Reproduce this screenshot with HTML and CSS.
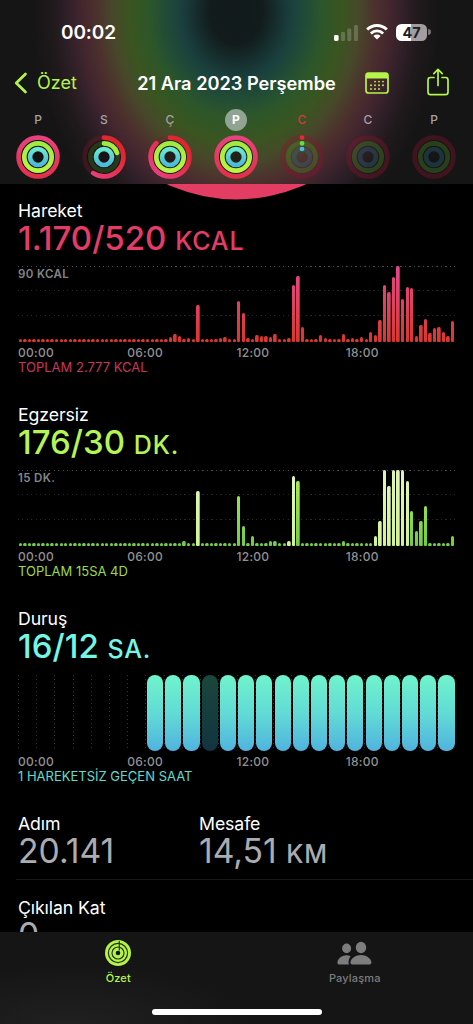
FILE: index.html
```html
<!DOCTYPE html>
<html lang="tr">
<head>
	<meta charset="UTF-8">
	<title>Özet</title>
	<link rel="stylesheet" href="styles.css">
</head>
<body>

	<div class="header">
		<div class="status">
			<span class="time">00:02</span>
			<div class="status_icons">
				<svg class="signal" width="25" height="17" viewBox="0 0 25 17">
					<rect x="0" y="11" width="4.6" height="6" rx="1.4" fill="#fff"/>
					<rect x="7" y="8" width="4" height="9" rx="1.2" fill="#fff" opacity=".2"/>
					<rect x="13.3" y="4.5" width="4" height="12.5" rx="1.2" fill="#fff" opacity=".2"/>
					<rect x="20" y="1" width="4" height="16" rx="1.2" fill="#fff" opacity=".2"/>
				</svg>
				<svg class="wifi" width="22" height="16" viewBox="0 0 22 16">
					<g fill="none" stroke="#fff" stroke-width="2.9">
						<path d="M1.2 5.6 A13.8 13.8 0 0 1 20.8 5.6"/>
						<path d="M4.9 9.4 A8.6 8.6 0 0 1 17.1 9.4"/>
					</g>
					<path d="M7.4 11.9 A5.1 5.1 0 0 1 14.6 11.9 L11 15.6 Z" fill="#fff"/>
				</svg>
				<div class="battery"><span>47</span></div>
				<svg width="3" height="6" viewBox="0 0 3 6"><path d="M0 0 A3 3 0 0 1 0 6Z" fill="#fff" opacity=".4"/></svg>
			</div>
		</div>

		<div class="nav">
			<div class="back">
				<svg width="14" height="22" viewBox="0 0 14 22"><path d="M11.5 2 L2.2 11 L11.5 20" fill="none" stroke="#b5f44a" stroke-width="2.7" stroke-linecap="round" stroke-linejoin="round"/></svg>
				<span>Özet</span>
			</div>
			<div class="title">21 Ara 2023 Perşembe</div>
			<div class="actions">
				<svg width="24" height="22" viewBox="0 0 24 22">
					<rect x="1" y="1" width="22" height="20" rx="2.6" fill="none" stroke="#b5f44a" stroke-width="1.7"/>
					<path d="M1 6.6 V3.4 Q1 1 3.4 1 H20.6 Q23 1 23 3.4 V6.6Z" fill="#b5f44a"/>
					<g stroke="#b5f44a" stroke-width="1.9" stroke-linecap="round" stroke-dasharray="0 4">
						<path d="M10 9.6 H18.5"/>
						<path d="M6 13.3 H18.5"/>
						<path d="M6 17 H14.5"/>
					</g>
				</svg>
				<svg class="share" width="22" height="28" viewBox="0 0 22 28" fill="none" stroke="#b5f44a" stroke-width="1.7" stroke-linecap="round" stroke-linejoin="round">
					<path d="M7 9.5 H3.4 Q1 9.5 1 12 V24 Q1 26.7 3.6 26.7 H18.4 Q21 26.7 21 24 V12 Q21 9.5 18.6 9.5 H15"/>
					<path d="M11 17.5 V1.6 M6.8 5.6 L11 1.4 L15.2 5.6"/>
				</svg>
			</div>
		</div>

		<div class="week" id="week"></div>
	</div>

	<div class="content">
		<svg class="big_ring" width="473" height="16" viewBox="0 184 473 16"><circle cx="236.5" cy="33" r="166.4" fill="#e33d63"/></svg>

		<div class="section move">
			<div class="label">Hareket</div>
			<div class="value">1.170/520 <small>KCAL</small></div>
			<div class="chart">
				<span class="max">90 KCAL</span>
				<div class="bars" id="bars_move"></div>
			</div>
			<div class="axis"><span>00:00</span><span>06:00</span><span>12:00</span><span>18:00</span></div>
			<div class="total">TOPLAM 2.777 KCAL</div>
		</div>

		<div class="section exercise">
			<div class="label">Egzersiz</div>
			<div class="value">176/30 <small>DK.</small></div>
			<div class="chart">
				<span class="max">15 DK.</span>
				<div class="bars" id="bars_exercise"></div>
			</div>
			<div class="axis"><span>00:00</span><span>06:00</span><span>12:00</span><span>18:00</span></div>
			<div class="total">TOPLAM 15SA 4D</div>
		</div>

		<div class="section stand">
			<div class="label">Duruş</div>
			<div class="value">16/12 <small>SA.</small></div>
			<div class="hours" id="hours"></div>
			<div class="axis"><span>00:00</span><span>06:00</span><span>12:00</span><span>18:00</span></div>
			<div class="total">1 HAREKETSİZ GEÇEN SAAT</div>
		</div>

		<div class="stats">
			<div class="stat">
				<div class="label">Adım</div>
				<div class="value">20.141</div>
			</div>
			<div class="stat">
				<div class="label">Mesafe</div>
				<div class="value">14,51 <small>KM</small></div>
			</div>
		</div>
		<div class="stats last">
			<div class="stat">
				<div class="label">Çıkılan Kat</div>
				<div class="value">0</div>
			</div>
		</div>
	</div>

	<div class="tabbar">
		<div class="tabs">
			<div class="tab active">
				<svg width="26" height="26" viewBox="0 0 26 26">
					<circle cx="13" cy="13" r="13" fill="#b5f44a"/>
					<g fill="none" stroke="#26330f" stroke-width="1.2">
						<circle cx="13" cy="13" r="9.6"/>
						<circle cx="13" cy="13" r="6"/>
						<path d="M14.3 1 V10.5"/>
					</g>
					<circle cx="13" cy="13" r="2.3" fill="#161616"/>
				</svg>
				<span>Özet</span>
			</div>
			<div class="tab">
				<svg width="35" height="26" viewBox="0 0 35 26" fill="#7d7d7d">
					<ellipse cx="9.6" cy="8.4" rx="4.5" ry="4.9"/>
					<path d="M13.6 16.2 Q11.8 15.2 9.5 15.2 C4 15.2 .4 19.4 .4 22.8 Q.4 24.5 2 24.5 H11.8 C11 21.5 12 18.4 13.6 16.2Z"/>
					<ellipse cx="24" cy="7.5" rx="5.2" ry="5.7"/>
					<path d="M24 15 C17.5 15 13.4 19.5 13.4 22.6 Q13.4 24.5 15.4 24.5 H32.4 Q34.4 24.5 34.4 22.6 C34.4 19.5 30.4 15 24 15Z"/>
				</svg>
				<span>Paylaşma</span>
			</div>
		</div>
		<div class="home"></div>
	</div>

	<script src="activity.js"></script>
</body>
</html>
```

FILE: activity.js
```js
// bar heights in px, one per 15 minutes; quarters that are not listed are idle
var move = {33:5, 34:8, 35:6.5, 37:4, 39:37, 44:4, 45:5, 48:41, 49:29, 50:4, 52:7, 53:6, 54:6, 55:5.5, 56:8, 59:4,
	60:57.5, 61:66, 62:15, 66:7, 67:4.5, 71:8, 73:4, 75:5, 77:10, 78:7, 79:22, 80:57, 81:50, 82:65, 83:76,
	84:43, 85:55, 86:54, 87:6, 88:17, 89:23, 90:9, 91:14, 92:15, 93:10, 94:6.5, 95:21};
var exercise = {36:5, 39:55, 48:50, 49:20, 51:10, 55:5, 56:5, 59:5, 60:70.5, 61:65.5, 71:5, 78:10, 79:25, 80:76,
	81:60, 82:76, 83:76, 84:76, 85:65.5, 86:35, 87:15, 88:25, 89:40, 95:10};
// quarters that belong to a workout
var workout = [39, 59, 60, 78, 79, 80, 81, 82, 83, 84, 85];

function drawBars(box, data, pale){
	var html = '';
	for(var i = 0; i < 96; i++){
		html += '<i' + (pale.indexOf(i) >= 0 ? ' class="pale"' : '') + ' style="height:' + (data[i] || 3.4) + 'px"></i>';
	}
	box.innerHTML = html;
}
drawBars(document.getElementById('bars_move'), move, []);
drawBars(document.getElementById('bars_exercise'), exercise, workout);

var html = '';
for(var h = 0; h < 24; h++){
	html += '<div>' + (h > 6 ? '<b' + (h == 10 ? ' class="idle"' : '') + '></b>' : '') + '</div>';
}
document.getElementById('hours').innerHTML = html;

// week strip: day letter, then how full each ring is
var days = [
	{d:'P', r:[1, 1, 1]},
	{d:'S', r:[.59, .2, 1]},
	{d:'Ç', r:[.87, 1, 1]},
	{d:'P', r:[1, 1, 1], cls:'selected'},
	{d:'C', r:[.001, .001, .001], cls:'today'},
	{d:'C', r:[0, 0, 0], cls:'future'},
	{d:'P', r:[0, 0, 0], cls:'future'}
];
var radius = [19.4, 13.7, 8];
var colors = ['url(#gm)', 'url(#ge)', 'url(#gs)'];
var start = ['#e3293c', '#6bdc48', '#4fb8dc'];
var tracks = ['#8e1430', '#4b8d22', '#2c6d83'];

function rings(r){
	var s = '<svg width="46" height="46" viewBox="-23 -23 46 46">';
	if(r[0] >= .5) s += '<circle r="' + (r[0] == 1 ? 21 : 17) + '" class="disc"/>';
	for(var i = 0; i < 3; i++){
		var len = 2 * Math.PI * radius[i];
		var color = r[i] < .01 ? start[i] : colors[i];
		if(i == 0 && r[i] < 1 && r[i] > .01) color = 'url(#gp)';
		if(r[i] < 1) s += '<circle class="track" r="' + radius[i] + '" stroke="' + tracks[i] + '"/>';
		if(r[i]) s += '<circle class="fill" r="' + radius[i] + '" stroke="' + color + '" stroke-dasharray="' + (len * r[i]) + ' ' + len * 2 + '"/>';
	}
	return s + '</svg>';
}
var week = '<svg class="defs" width="0" height="0"><defs>' +
	'<linearGradient id="gm"><stop offset="0" stop-color="#e2304b"/><stop offset="1" stop-color="#e8417f"/></linearGradient>' +
	'<linearGradient id="gp" x1="1" y1="1" x2="0" y2="0"><stop offset=".2" stop-color="#dd2730"/><stop offset=".9" stop-color="#e83f7c"/></linearGradient>' +
	'<linearGradient id="ge"><stop offset="0" stop-color="#b8f545"/><stop offset="1" stop-color="#a0ea40"/></linearGradient>' +
	'<linearGradient id="gs"><stop offset="0" stop-color="#4cbada"/><stop offset="1" stop-color="#6be8d0"/></linearGradient>' +
	'</defs></svg>';
days.forEach(function(day){
	week += '<div class="day ' + (day.cls || '') + '"><span>' + day.d + '</span>' + rings(day.r) + '</div>';
});
document.getElementById('week').innerHTML = week;
```

FILE: styles.css
```css
*{
	box-sizing: border-box;
}
body{
	margin: 0;
	width: 473px;
	height: 1024px;
	display: flex;
	flex-direction: column;
	overflow: hidden;
	background: #000;
	color: #fff;
	font-family: Inter, "Liberation Sans", sans-serif;
}
svg{
	display: block;
}
.header{
	flex: none;
	height: 184px;
	padding-top: 20px;
	background: radial-gradient(ellipse 205px 250px at 236px 12px, #121a1b 0, #121c1d 13%, #1a403e 27%, #214b37 34%, #2c562a 42%, #3a5520 52%, #47482a 60%, #4c312d 68%, #44262f 75%, #302028 82%, #1f191b 90%, #151515 100%);
}
.status{
	display: flex;
	justify-content: space-between;
	align-items: center;
	height: 24px;
	padding: 0 42px 0 61px;
}
.time{
	font-size: 19px;
	font-weight: 600;
	letter-spacing: -.1px;
}
.status_icons{
	display: flex;
	align-items: center;
}
.wifi{
	margin: 0 8px 0 7px;
}
.battery{
	width: 31px;
	height: 17px;
	margin-right: 1px;
	border-radius: 5.5px;
	background: linear-gradient(90deg, #fff 47%, #a39da0 47%);
	color: #211c20;
	font-size: 14.5px;
	line-height: 17px;
	font-weight: 700;
	text-align: center;
}
.nav{
	display: grid;
	grid-template-columns: 123px 227px 1fr;
	align-items: center;
	height: 51px;
	margin: 13px 0 1px;
}
.back{
	display: flex;
	align-items: center;
	gap: 9px;
	padding-left: 14px;
	color: #b5f44a;
	font-size: 18px;
}
.title{
	font-size: 18.2px;
	font-weight: 600;
	text-align: center;
	white-space: nowrap;
}
.actions{
	display: flex;
	align-items: center;
	gap: 38px;
	padding-left: 15px;
}
.share{
	margin-bottom: 1px;
}
.week{
	display: grid;
	grid-template-columns: repeat(7, 66px);
	padding-left: 5px;
}
.defs{
	position: absolute;
}
.day{
	display: flex;
	flex-direction: column;
	align-items: center;
	gap: 3px;
	color: #a5a1a1;
	font-size: 12px;
	font-weight: 500;
}
.day span{
	width: 22px;
	height: 22px;
	border-radius: 50%;
	line-height: 22px;
	text-align: center;
}
.selected span{
	background: #91a392;
	color: #fff;
	font-weight: 700;
}
.today span{
	color: #cf3a3c;
}
.track, .fill{
	fill: none;
	stroke-width: 4.7;
}
.track{
	opacity: .3;
}
.today .track, .future .track{
	opacity: .36;
}
.fill{
	stroke-linecap: round;
	transform: rotate(-90deg);
}
.disc{
	fill: #111;
	opacity: .7;
}
.content{
	flex: 1;
	min-height: 0;
	overflow: hidden;
}
.section{
	height: 204px;
	padding: 0 18px;
}
.label{
	font-size: 17.7px;
	line-height: 21px;
	letter-spacing: -.1px;
}
.value{
	height: 34px;
	font-size: 33px;
	line-height: 34px;
	font-weight: 450;
	white-space: nowrap;
}
.value small{
	font-size: 25px;
	line-height: 1;
	font-weight: 500;
	letter-spacing: .8px;
}
.move .value, .move .total{
	color: #e33d67;
}
.exercise .value, .exercise .total{
	color: #b5f454;
}
.stand .value, .stand .total{
	color: #74f6e4;
}
.section .total{
	opacity: .88;
	font-size: 13px;
	line-height: 13px;
	white-space: nowrap;
}
.chart{
	height: 76px;
	margin-top: 11px;
	position: relative;
	background:
		repeating-linear-gradient(90deg, #4a4a4a 0 1px, transparent 1px 4.5px) 0 0 / 100% 1px no-repeat,
		repeating-linear-gradient(90deg, #292929 0 1px, transparent 1px 4.5px) 0 24px / 100% 1px no-repeat,
		repeating-linear-gradient(90deg, #292929 0 1px, transparent 1px 4.5px) 0 49px / 100% 1px no-repeat;
}
/* scale label sits over the grid */
.max{
	position: absolute;
	left: 0;
	top: 1px;
	color: #858585;
	font-size: 11.5px;
	line-height: 15px;
	font-weight: 600;
	letter-spacing: .35px;
}
.bars{
	display: grid;
	grid-template-columns: repeat(96, 1fr);
	align-items: end;
	justify-items: center;
	height: 76px;
}
.bars i{
	width: 3.4px;
	border-radius: 1.7px 1.7px 1px 1px;
	background: linear-gradient(#e5468c, #e2405f 50%, #dc352c) bottom / 100% 76px;
}
.exercise .bars i{
	background: linear-gradient(#b3ef57, #92de4a 50%, #6fce45) bottom / 100% 76px;
}
.exercise .bars .pale{
	background: linear-gradient(#e1f5ba, #d2f394) bottom / 100% 76px;
}
.hours{
	display: grid;
	grid-template-columns: repeat(24, 1fr);
	height: 76px;
	margin-top: 12px;
	background: repeating-linear-gradient(#333 0 1px, transparent 1px 4px) right / 1px 100% no-repeat;
}
.hours div{
	padding: 0 .5px 0 1.6px;
	background: repeating-linear-gradient(#333 0 1px, transparent 1px 4px) left / 1px 100% no-repeat;
}
.hours b{
	display: block;
	height: 76px;
	border-radius: 8px;
	background: linear-gradient(#70f3cc, #62dbd5 50%, #50b3df);
}
.hours .idle{
	background: linear-gradient(#1b473c, #123440);
}
.axis{
	display: grid;
	grid-template-columns: repeat(4, 1fr);
	height: 19px;
	color: #929292;
	font-size: 12px;
	line-height: 21px;
	font-weight: 500;
	letter-spacing: .25px;
}
.stats{
	display: grid;
	grid-template-columns: 181px 1fr;
	height: 68px;
	margin-left: 16px;
	padding: 1px 0 0 2px;
	border-bottom: 1px solid #171717;
}
.stats .value{
	color: #abacb0;
	font-size: 33.7px;
	font-weight: 400;
}
.stats.last{
	height: 60px;
	padding-top: 17px;
	border: 0;
}
.tabbar{
	flex: none;
	height: 92px;
	padding-top: 8px;
	background: radial-gradient(ellipse 190px 60px at 70px 92px, #202020, #151515);
}
.tabs{
	display: grid;
	grid-template-columns: 1fr 1fr;
	height: 69px;
}
.tab{
	display: flex;
	flex-direction: column;
	align-items: center;
	gap: 5px;
	color: #7d7d7d;
	font-size: 11px;
	line-height: 15px;
	font-weight: 500;
	letter-spacing: .15px;
}
.active{
	color: #b5f44a;
}
.home{
	width: 170px;
	height: 6px;
	margin: 0 auto;
	border-radius: 3px;
	background: #fff;
}
```
